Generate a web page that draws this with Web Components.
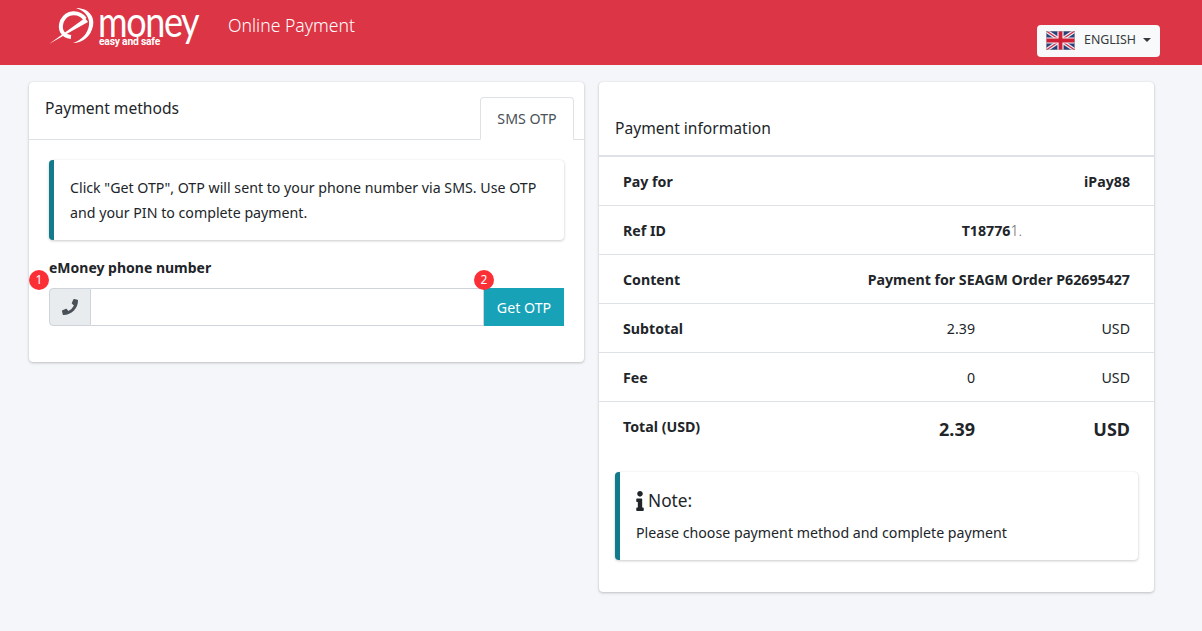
<!DOCTYPE html>
<html lang="en">
<head>
<meta charset="utf-8">
<title>eMoney Online Payment</title>
<style>
  html, body { margin: 0; height: 100%; overflow: hidden; }
  body {
    background: #f4f6f9;
    color: #212529;
    font-family: "Noto Sans", "Open Sans", sans-serif;
    font-size: 14.2px;
  }
</style>
</head>
<body>
<em-app></em-app>

<script>
const FONT_STACK = '"Noto Sans", "Open Sans", sans-serif';

class EmLogo extends HTMLElement {
  connectedCallback() {
    let shadow = this.attachShadow({ mode: "open" });
    shadow.innerHTML = `
    <style>
      :host { display: block; width: 152px; height: 46px; position: relative; color: #fff; }
      svg { position: absolute; left: -1px; top: 0; }
      .word {
        position: absolute; left: 48px; top: 2px;
        font: 400 36px/26px Lato, sans-serif; letter-spacing: -1.4px;
        transform: scaleY(1.2); transform-origin: 0 27px;
      }
      .tag {
        position: absolute; left: 49px; top: 28px;
        font: 700 10.3px/11px Roboto, sans-serif; letter-spacing: -.2px;
      }
    </style>
    <svg width="50" height="38" viewBox="0 0 50 38" fill="none">
      <path d="M36 11 C30 3 18 3 13 13 C10 21 13 28 22 29" stroke="#fff" stroke-width="4"/>
      <path d="M0 36 L36 10 L39 14 L14 28 Z" fill="#fff"/>
      <path d="M27 0 C40 0 46 9 44 18 C42 28 34 35 24 35 C33 32 39 25 40 17 C41 9 36 3 27 0Z" fill="#fff"/>
    </svg>
    <span class="word">money</span>
    <span class="tag">easy and safe</span>
  `;
  }
}

class EmLangButton extends HTMLElement {
  connectedCallback() {
    let shadow = this.attachShadow({ mode: "open" });
    shadow.innerHTML = `
    <style>
      :host {
        display: flex; align-items: center; box-sizing: border-box;
        width: 123px; height: 32px; padding: 0 0 1px 9px;
        background: #f8f9fa; border-radius: 4px;
        color: #343a40; font-size: 12.4px;
      }
      svg { display: block; margin-right: 9px; }
      span.name { margin-top: -2px; }
      .caret {
        margin: -2px 0 0 7px; width: 0; height: 0;
        border-top: 4.5px solid #343a40;
        border-left: 4.5px solid transparent;
        border-right: 4.5px solid transparent;
      }
    </style>
    <svg width="29" height="19" viewBox="0 0 60 40">
      <rect width="60" height="40" fill="#2a3f7a"/>
      <path d="M0 0L60 40M60 0L0 40" stroke="#e8e8ee" stroke-width="8"/>
      <path d="M0 0L60 40M60 0L0 40" stroke="#cf2b45" stroke-width="2.6"/>
      <path d="M30 0V40M0 20H60" stroke="#f2f2f6" stroke-width="13"/>
      <path d="M30 0V40M0 20H60" stroke="#cf2035" stroke-width="8"/>
      <rect x=".5" y=".5" width="59" height="39" fill="none" stroke="#a9a9ae"/>
    </svg>
    <span class="name">ENGLISH</span>
    <span class="caret"></span>
  `;
  }
}

class EmHeader extends HTMLElement {
  connectedCallback() {
    let shadow = this.attachShadow({ mode: "open" });
    shadow.innerHTML = `
    <style>
      :host {
        display: flex; box-sizing: border-box; height: 65px;
        padding: 8px 42px 0 50px;
        background: #dc3545; color: #fff;
      }
      .title { margin-left: 26px; font-size: 17.6px; font-weight: 300; line-height: 34px; }
      em-lang-button { margin: 17px 0 0 auto; }
    </style>
    <em-logo></em-logo>
    <span class="title">Online Payment</span>
    <em-lang-button></em-lang-button>
  `;
  }
}

class EmCard extends HTMLElement {
  connectedCallback() {
    let shadow = this.attachShadow({ mode: "open" });
    shadow.innerHTML = `
    <style>
      :host {
        display: block; box-sizing: border-box;
        background: #fff; border-radius: 4px;
        box-shadow: 0 0 1px rgba(0,0,0,.13), 0 1px 3px rgba(0,0,0,.22);
      }
    </style>
    <slot></slot>
  `;
  }
}

class EmCallout extends HTMLElement {
  connectedCallback() {
    let shadow = this.attachShadow({ mode: "open" });
    shadow.innerHTML = `
    <style>
      :host {
        display: block; box-sizing: border-box;
        background: #fff; border-left: 5px solid #117a8b; border-radius: 4px;
        box-shadow: 0 1px 3px rgba(0,0,0,.2), 0 0 1px rgba(0,0,0,.1);
      }
    </style>
    <slot></slot>
  `;
  }
}

class EmBadge extends HTMLElement {
  connectedCallback() {
    let shadow = this.attachShadow({ mode: "open" });
    shadow.innerHTML = `
    <style>
      :host {
        position: absolute; display: flex; align-items: center; justify-content: center;
        width: 20px; height: 20px; border-radius: 50%;
        background: #fa3036; color: #fff; font-size: 12px; line-height: 1;
      }
    </style>
    <slot></slot>
  `;
  }
}

class EmPaymentMethods extends HTMLElement {
  connectedCallback() {
    let shadow = this.attachShadow({ mode: "open" });
    shadow.innerHTML = `
    <style>
      :host { display: block; }
      .head {
        display: flex; justify-content: space-between; align-items: flex-end;
        box-sizing: border-box; height: 58px; padding: 0 10px 0 16px;
        border-bottom: 1px solid #dee2e6;
      }
      h3 { margin: 0; align-self: flex-start; font-size: 15.6px; font-weight: 400; line-height: 52px; }
      .tab {
        box-sizing: border-box; width: 94px; height: 43px; margin-bottom: -1px;
        border: 1px solid #dee2e6; border-bottom-color: #fff; border-radius: 4px 4px 0 0;
        color: #495057; font-size: 14.2px; line-height: 41px; text-align: center;
      }
      .body { padding: 20px 20px 36px; }
      em-callout { height: 80px; padding: 15px 16px; font-size: 14.2px; line-height: 25px; }
      label { display: block; margin-top: 18px; font-size: 14px; font-weight: 700; line-height: 20px; }
      .group { position: relative; display: flex; height: 38px; margin-top: 10px; }
      .addon {
        display: flex; align-items: center; justify-content: center;
        box-sizing: border-box; width: 42px;
        background: #e9ecef; border: 1px solid #ced4da; border-radius: 4px 0 0 4px;
      }
      input {
        flex: 1; min-width: 0; box-sizing: border-box; padding: 0 12px;
        border: 1px solid #ced4da; border-left: 0; border-radius: 0; outline: 0;
        background: #fff; font: inherit;
      }
      button {
        width: 80px; padding: 0; border: 0; border-radius: 0;
        background: #17a2b8; color: #fff; font: inherit; font-size: 14.2px;
      }
      .one { left: -20px; top: -18px; }
      .two { left: 425px; top: -18px; }
    </style>
    <div class="head">
      <h3>Payment methods</h3>
      <div class="tab">SMS OTP</div>
    </div>
    <div class="body">
      <em-callout>Click "Get OTP", OTP will sent to your phone number via SMS. Use OTP and your PIN to complete payment.</em-callout>
      <label>eMoney phone number</label>
      <div class="group">
        <em-badge class="one">1</em-badge>
        <em-badge class="two">2</em-badge>
        <span class="addon">
          <svg width="16" height="16" viewBox="0 0 512 512"><path fill="#495057" transform="matrix(-1 0 0 1 512 0)" d="M497.39 361.8l-112-48a24 24 0 0 0-28 6.9l-49.6 60.6A370.66 370.66 0 0 1 130.6 204.11l60.6-49.6a23.94 23.94 0 0 0 6.9-28l-48-112A24.16 24.16 0 0 0 122.6.61l-104 24A24 24 0 0 0 0 48c0 256.5 207.9 464 464 464a24 24 0 0 0 23.4-18.6l24-104a24.29 24.29 0 0 0-14.01-27.6z"/></svg>
        </span>
        <input type="text">
        <button>Get OTP</button>
      </div>
    </div>
  `;
  }
}

class EmInfoRow extends HTMLElement {
  connectedCallback() {
    let shadow = this.attachShadow({ mode: "open" });
    shadow.innerHTML = `
    <style>
      :host {
        display: grid; grid-template-columns: 1fr 155px; align-items: center;
        box-sizing: border-box; height: 49px; padding: 0 24px;
        border-bottom: 1px solid #dee2e6;
        font-size: 14.2px;
      }
      .label { position: absolute; font-weight: 700; }
      .value { text-align: right; }
      .unit { text-align: right; }
      :host([wide]) .value { grid-column: 1 / 3; font-weight: 700; }
      :host([total]) { height: 53px; border-bottom: 0; font-size: 18px; font-weight: 700; }
      :host([total]) .label { font-size: 14.2px; margin-top: -5px; }
    </style>
    <span class="label">${this.getAttribute("label")}</span>
    <span class="value"><slot></slot></span>
    ${this.hasAttribute("unit") ? `<span class="unit">${this.getAttribute("unit")}</span>` : ""}
  `;
  }
}

class EmPaymentInfo extends HTMLElement {
  connectedCallback() {
    let shadow = this.attachShadow({ mode: "open" });
    shadow.innerHTML = `
    <style>
      :host { display: block; padding-bottom: 32px; }
      h3 {
        margin: 0; box-sizing: border-box; height: 75px; padding: 30px 16px 0;
        border-bottom: 2px solid #dee2e6;
        font-size: 15.6px; font-weight: 400; line-height: 32px;
      }
      .ref { display: flex; font-weight: 700; padding-right: 108px; justify-content: flex-end; }
      .ref i { font-style: normal; font-weight: 300; color: #666; }
      em-callout { height: 88px; margin: 17px 16px 0; padding: 14px 16px; }
      .note { display: flex; align-items: center; gap: 4px; font-size: 17.3px; line-height: 30px; }
      .note svg { display: block; }
      p { margin: 6px 0 0; font-size: 14.2px; line-height: 22px; }
    </style>
    <h3>Payment information</h3>
    <em-info-row wide label="Pay for">iPay88</em-info-row>
    <em-info-row wide label="Ref ID"><span class="ref">T18776<i>1.</i></span></em-info-row>
    <em-info-row wide label="Content">Payment for SEAGM Order P62695427</em-info-row>
    <em-info-row label="Subtotal" unit="USD">2.39</em-info-row>
    <em-info-row label="Fee" unit="USD">0</em-info-row>
    <em-info-row total label="Total (USD)" unit="USD">2.39</em-info-row>
    <em-callout>
      <div class="note">
        <svg width="8" height="20" viewBox="0 0 192 512"><path fill="#212529" d="M20 424.229h20V279.771H20c-11.046 0-20-8.954-20-20V212c0-11.046 8.954-20 20-20h112c11.046 0 20 8.954 20 20v212.229h20c11.046 0 20 8.954 20 20V492c0 11.046-8.954 20-20 20H20c-11.046 0-20-8.954-20-20v-47.771c0-11.046 8.954-20 20-20zM96 0C56.235 0 24 32.235 24 72s32.235 72 72 72 72-32.235 72-72S135.764 0 96 0z"/></svg>
        <span>Note:</span>
      </div>
      <p>Please choose payment method and complete payment</p>
    </em-callout>
  `;
  }
}

class EmApp extends HTMLElement {
  connectedCallback() {
    let shadow = this.attachShadow({ mode: "open" });
    shadow.innerHTML = `
    <style>
      :host { display: block; font-family: ${FONT_STACK}; }
      main {
        display: grid; grid-template-columns: 555px 555px; gap: 15px;
        align-items: start; padding: 17px 0 0 29px;
      }
    </style>
    <em-header></em-header>
    <main>
      <em-card><em-payment-methods></em-payment-methods></em-card>
      <em-card><em-payment-info></em-payment-info></em-card>
    </main>
  `;
  }
}

customElements.define("em-logo", EmLogo);
customElements.define("em-lang-button", EmLangButton);
customElements.define("em-header", EmHeader);
customElements.define("em-card", EmCard);
customElements.define("em-callout", EmCallout);
customElements.define("em-badge", EmBadge);
customElements.define("em-payment-methods", EmPaymentMethods);
customElements.define("em-info-row", EmInfoRow);
customElements.define("em-payment-info", EmPaymentInfo);
customElements.define("em-app", EmApp);
</script>
</body>
</html>
